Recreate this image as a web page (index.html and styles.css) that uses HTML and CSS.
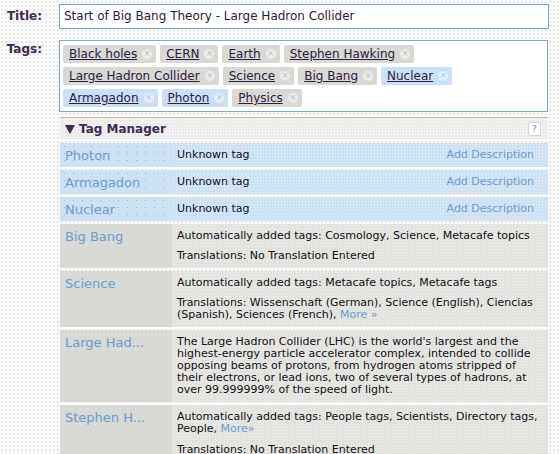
FILE: index.html
```html
<!DOCTYPE html>
<html>
<head>
<meta charset="utf-8">
<link rel="stylesheet" href="styles.css">
</head>
<body>
<div class="page">
  <div class="field">
    <div class="lbl">Title:</div>
    <div class="input">Start of Big Bang Theory - Large Hadron Collider</div>
  </div>
  <div class="field">
    <div class="lbl">Tags:</div>
    <div class="tagbox">
      <span class="chip"><a>Black holes</a><i class="x">×</i></span>
      <span class="chip"><a>CERN</a><i class="x">×</i></span>
      <span class="chip"><a>Earth</a><i class="x">×</i></span>
      <span class="chip"><a>Stephen Hawking</a><i class="x">×</i></span>
      <span class="chip"><a>Large Hadron Collider</a><i class="x">×</i></span>
      <span class="chip"><a>Science</a><i class="x">×</i></span>
      <span class="chip"><a>Big Bang</a><i class="x">×</i></span>
      <span class="chip new"><a>Nuclear</a><i class="x">×</i></span>
      <span class="chip new"><a>Armagadon</a><i class="x">×</i></span>
      <span class="chip new"><a>Photon</a><i class="x">×</i></span>
      <span class="chip"><a>Physics</a><i class="x">×</i></span>
    </div>
  </div>

  <div class="tm">
    <div class="tm-head"><span class="tri"></span><span class="tm-title">Tag Manager</span><span class="help">?</span></div>

    <div class="row unknown">
      <div class="name">Photon</div>
      <div class="info"><span>Unknown tag</span><a class="add">Add Description</a></div>
    </div>
    <div class="row unknown">
      <div class="name">Armagadon</div>
      <div class="info"><span>Unknown tag</span><a class="add">Add Description</a></div>
    </div>
    <div class="row unknown">
      <div class="name">Nuclear</div>
      <div class="info"><span>Unknown tag</span><a class="add">Add Description</a></div>
    </div>

    <div class="row">
      <div class="name">Big Bang</div>
      <div class="info col">
        <p>Automatically added tags: Cosmology, Science, Metacafe topics</p>
        <p>Translations: No Translation Entered</p>
      </div>
    </div>
    <div class="row">
      <div class="name">Science</div>
      <div class="info col">
        <p>Automatically added tags: Metacafe topics, Metacafe tags</p>
        <p><span class="ln">Translations: Wissenschaft (German), Science (English), Ciencias</span><br><span class="ln">(Spanish), Sciences (French),</span> <a class="more">More »</a></p>
      </div>
    </div>
    <div class="row">
      <div class="name">Large Had...</div>
      <div class="info col">
        <p>The Large Hadron Collider (LHC) is the world's largest and the<br>highest-energy particle accelerator complex, intended to collide<br>opposing beams of protons, from hydrogen atoms stripped of<br>their electrons, or lead ions, two of several types of hadrons, at<br>over 99.999999% of the speed of light.</p>
      </div>
    </div>
    <div class="row">
      <div class="name">Stephen H...</div>
      <div class="info col">
        <p><span class="ln">Automatically added tags: People tags, Scientists, Directory tags,</span><br><span class="ln">People,</span> <a class="more">More»</a></p>
        <p class="gap">Translations: No Translation Entered</p>
      </div>
    </div>
  </div>
</div>
</body>
</html>
```

FILE: styles.css
```css
html, body {
  margin: 0;
  padding: 0;
}
body {
  width: 560px;
  height: 454px;
  overflow: hidden;
  font-family: "DejaVu Sans", Verdana, sans-serif;
  color: #1e1428;
  background-color: #fbfbfb;
  background-image: radial-gradient(circle, #dcdcdc 0.6px, transparent 0.9px);
  background-size: 4px 4px;
}
.page {
  padding-top: 4px;
}
.field {
  display: flex;
  align-items: flex-start;
  margin-bottom: 11px;
}
.lbl {
  width: 42px;
  margin-right: 17px;
  text-align: right;
  font-weight: bold;
  font-size: 12px;
  color: #3c2b4e;
  padding-top: 5px;
}
.field:nth-child(2) .lbl {
  padding-top: 2px;
}
.input {
  width: 480px;
  height: 23px;
  line-height: 23px;
  border: 1px solid #7fa7cf;
  background: #fff;
  padding: 0 4px;
  font-size: 12px;
  color: #2a2038;
}
.tagbox {
  width: 484px;
  height: 63px;
  border: 1px solid #7fa7cf;
  background: #fff;
  padding: 4px 0 3px 3px;
  display: flex;
  flex-wrap: wrap;
  align-content: flex-start;
  column-gap: 4px;
  row-gap: 4px;
}
.chip {
  display: inline-flex;
  align-items: center;
  height: 18px;
  padding: 0 4px 0 6px;
  background: #d8d8d4;
  border-radius: 2px;
  font-size: 12px;
}
.chip.new {
  background: #cce0f5;
}
.chip a {
  color: #2e2040;
  text-decoration: underline;
}
.x {
  display: inline-block;
  width: 10px;
  height: 10px;
  margin-left: 5px;
  border-radius: 50%;
  background: #ebebe9;
  color: #bdbdb9;
  font-style: normal;
  font-size: 8px;
  line-height: 10px;
  text-align: center;
}
.chip.new .x {
  background: #e3eefa;
  color: #aac4e0;
}
.tm {
  margin-left: 60px;
  width: 488px;
  margin-top: -6px;
}
.tm-head {
  display: flex;
  align-items: center;
  height: 21px;
  border-top: 1px solid #c8b896;
  background-color: #ececec;
  background-image: radial-gradient(circle, #ffffff 0.6px, transparent 0.9px);
  background-size: 3px 3px;
  padding: 0 7px 0 5px;
  margin-bottom: 4px;
}
.tri {
  width: 0;
  height: 0;
  border-left: 5px solid transparent;
  border-right: 5px solid transparent;
  border-top: 9px solid #3c2b4e;
  margin-right: 4px;
  margin-top: 1px;
}
.tm-title {
  font-weight: bold;
  font-size: 12px;
  color: #3c2b4e;
  flex: 1;
}
.help {
  width: 11px;
  height: 12px;
  background: #fff;
  border: 1px solid #d4d4d4;
  border-radius: 1px;
  font-size: 9px;
  line-height: 12px;
  text-align: center;
  color: #7a8ea8;
}
.row {
  display: flex;
  margin-bottom: 3px;
}
.name {
  width: 107px;
  flex: none;
  padding: 5px 0 0 5px;
  font-size: 13px;
  color: #6c9fcf;
  background-color: #d8d8d4;
  background-image: radial-gradient(circle, #dfe6ee 0.6px, transparent 0.9px);
  background-size: 8px 8px;
}
.info {
  flex: 1;
  background-color: #e2e2de;
  background-image: radial-gradient(circle, #f0f0ee 0.5px, transparent 0.8px);
  background-size: 3px 3px;
  padding: 6px 2px 6px 5px;
  font-size: 11px;
  line-height: 12px;
  color: #141018;
}
.unknown .name {
  background-color: #cde1f5;
  background-image: radial-gradient(circle, #8fb4da 0.6px, transparent 0.9px);
  background-size: 9px 7px;
  height: 19px;
}
.unknown .info {
  background-color: #cde1f5;
  background-image: radial-gradient(circle, #e8f1fb 0.5px, transparent 0.8px);
  background-size: 3px 3px;
  display: flex;
  justify-content: space-between;
  align-items: center;
  padding: 0 14px 0 5px;
}
.add {
  color: #6c9fcf;
}
.info p {
  margin: 0 0 8px 0;
}
.info p:last-child {
  margin-bottom: 0;
}
.info p.gap {
  margin-top: 9px;
}
.ln {
  white-space: nowrap;
}
.more {
  color: #6c9fcf;
}
```
